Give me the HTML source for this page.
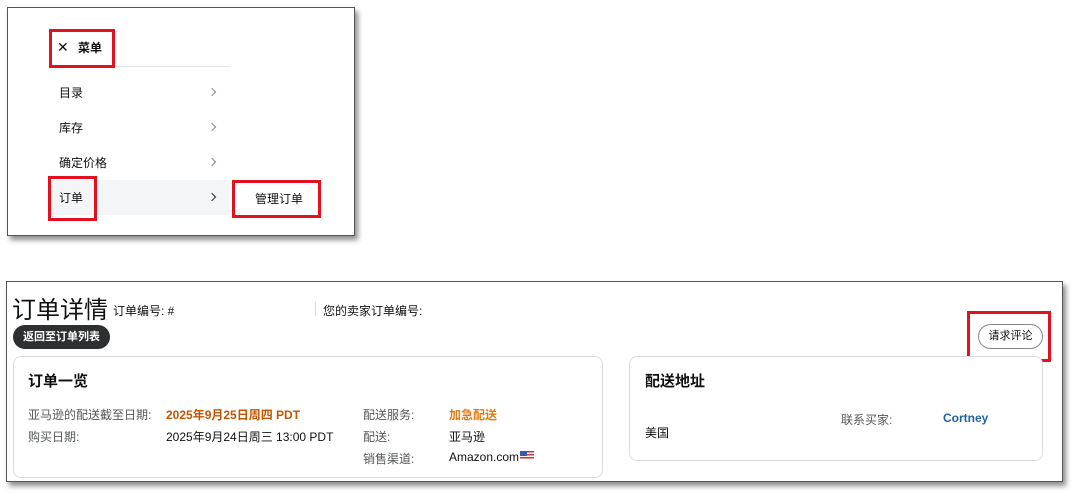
<!DOCTYPE html>
<html><head><meta charset="utf-8"><style>
*{margin:0;padding:0;box-sizing:border-box}
body{width:1080px;height:493px;background:#fff;position:relative;overflow:hidden;font-family:"Liberation Sans","Noto Sans CJK SC",sans-serif;color:#0f1111}
.a{position:absolute;white-space:nowrap}
.red{position:absolute;border:3px solid #e3101e}
.box{position:absolute;border:1px solid #555;background:#fff;box-shadow:3px 4px 5px rgba(0,0,0,.45)}
.chev{position:absolute;width:6px;height:6px;border-top:1.5px solid #888;border-right:1.5px solid #888;transform:rotate(45deg)}
.card{position:absolute;border:1px solid #ddd;border-radius:8px;background:#fff}
.s{font-size:12px}
.g{color:#565959}
</style></head><body>
<div class="box" style="left:7px;top:7px;width:348px;height:229px"></div>
<div class="a" style="left:49px;top:66px;width:181px;height:1px;background:#e3e6e6"></div>
<div class="a" style="left:49px;top:180px;width:181px;height:35px;background:#f3f5f6"></div>
<div class="a" style="left:57px;top:39px;font-size:14px">✕</div>
<div class="a" style="left:78px;top:39px;font-size:12px;font-weight:bold">菜单</div>
<div class="a s" style="left:59px;top:84px">目录</div>
<div class="a s" style="left:59px;top:119px">库存</div>
<div class="a s" style="left:59px;top:154px">确定价格</div>
<div class="a s" style="left:59px;top:189px">订单</div>
<div class="chev" style="left:209px;top:89px"></div>
<div class="chev" style="left:209px;top:124px"></div>
<div class="chev" style="left:209px;top:159px"></div>
<div class="chev" style="left:209px;top:194px;border-color:#333"></div>
<div class="a s" style="left:255px;top:190px">管理订单</div>
<div class="red" style="left:49px;top:29px;width:66px;height:39px"></div>
<div class="red" style="left:48px;top:176px;width:49px;height:45px"></div>
<div class="red" style="left:232px;top:180px;width:89px;height:38px"></div>

<div class="box" style="left:6px;top:281px;width:1057px;height:201px"></div>
<div class="a" style="left:12px;top:290px;font-size:24px">订单详情</div>
<div class="a s" style="left:113px;top:302px">订单编号: #</div>
<div class="a" style="left:315px;top:302px;width:1px;height:14px;background:#ddd"></div>
<div class="a s" style="left:323px;top:302px">您的卖家订单编号:</div>
<div class="a" style="left:13px;top:325px;width:97px;height:24px;border-radius:12px;background:#2d3030;color:#fff;font-size:11px;font-weight:bold;line-height:24px;text-align:center">返回至订单列表</div>
<div class="a" style="left:978px;top:324px;width:65px;height:25px;border-radius:13px;border:1px solid #888;font-size:11px;line-height:23px;text-align:center">请求评论</div>
<div class="red" style="left:967px;top:311px;width:84px;height:51px"></div>
<div class="card" style="left:13px;top:356px;width:590px;height:122px"></div>
<div class="card" style="left:629px;top:356px;width:414px;height:105px"></div>
<div class="a" style="left:28px;top:370px;font-size:15px;font-weight:bold">订单一览</div>
<div class="a s g" style="left:28px;top:406px">亚马逊的配送截至日期:</div>
<div class="a s" style="left:166px;top:406px;color:#c45500;font-weight:bold">2025年9月25日周四 PDT</div>
<div class="a s g" style="left:28px;top:428px">购买日期:</div>
<div class="a s" style="left:166px;top:428px">2025年9月24日周三 13:00 PDT</div>
<div class="a s g" style="left:363px;top:406px">配送服务:</div>
<div class="a s" style="left:449px;top:406px;color:#e47911;font-weight:bold">加急配送</div>
<div class="a s g" style="left:363px;top:428px">配送:</div>
<div class="a s" style="left:449px;top:428px">亚马逊</div>
<div class="a s g" style="left:363px;top:450px">销售渠道:</div>
<div class="a s" style="left:449px;top:450px">Amazon.com</div>
<div class="a" style="left:520px;top:451px;width:14px;height:9px;background:repeating-linear-gradient(#c33 0 1.5px,#fff 1.5px 3px)"><div style="width:7px;height:5px;background:#3a5aa8"></div></div>
<div class="a" style="left:645px;top:370px;font-size:15px;font-weight:bold">配送地址</div>
<div class="a s" style="left:645px;top:424px">美国</div>
<div class="a s g" style="left:841px;top:411px">联系买家:</div>
<div class="a s" style="left:943px;top:411px;color:#2162a1;font-weight:bold">Cortney</div>
</body></html>
